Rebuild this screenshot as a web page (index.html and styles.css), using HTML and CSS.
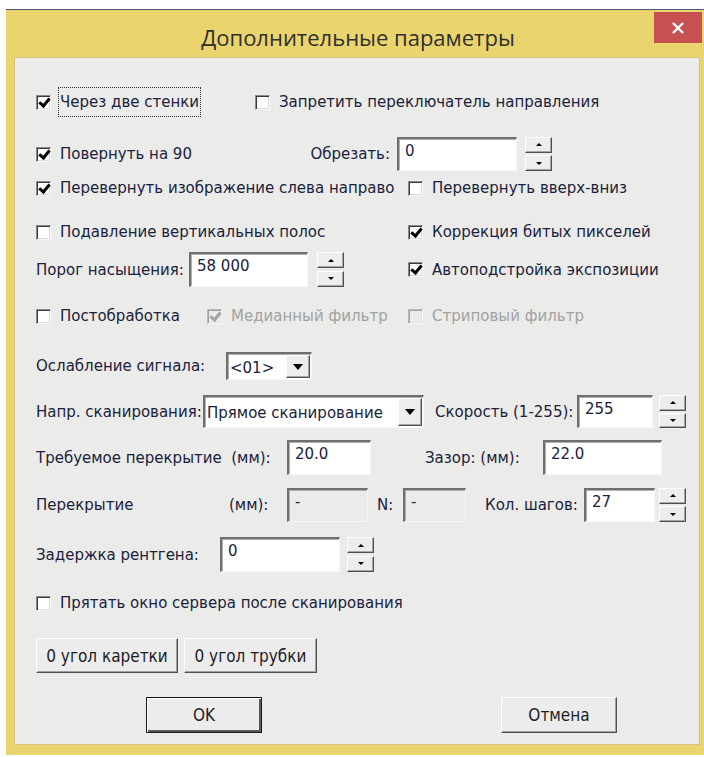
FILE: index.html
```html
<!DOCTYPE html>
<html lang="ru">
<head>
<meta charset="utf-8">
<title>Дополнительные параметры</title>
<link rel="stylesheet" href="styles.css">
</head>
<body>
<div class="window">
  <div class="titlebar">
    <span class="title">Дополнительные параметры</span>
    <span class="close"><svg width="14" height="14" viewBox="0 0 14 14"><path d="M2 2 L12 12 M12 2 L2 12" stroke="#fff" stroke-width="2.4"/></svg></span>
  </div>
  <div class="client">
    <!-- row 1 -->
    <div class="row r1">
      <label class="chk w219"><span class="box on"></span><span class="txt focus">Через две стенки</span></label>
      <label class="chk"><span class="box"></span><span class="txt">Запретить переключатель направления</span></label>
    </div>
    <!-- row 2 -->
    <div class="row r2">
      <label class="chk w261"><span class="box on"></span><span class="txt">Повернуть на 90</span></label>
      <span class="lbl w93 right">Обрезать:</span>
      <span class="field w120 ml7">0</span>
      <span class="spin ml8"><span class="sb"><i class="up"></i></span><span class="sb"><i class="dn"></i></span></span>
    </div>
    <!-- row 3 -->
    <div class="row r3">
      <label class="chk w372"><span class="box on"></span><span class="txt">Перевернуть изображение слева направо</span></label>
      <label class="chk"><span class="box"></span><span class="txt">Перевернуть вверх-вниз</span></label>
    </div>
    <!-- row 4 -->
    <div class="row r4">
      <label class="chk w372"><span class="box"></span><span class="txt">Подавление вертикальных полос</span></label>
      <label class="chk"><span class="box on"></span><span class="txt">Коррекция битых пикселей</span></label>
    </div>
    <!-- row 5 -->
    <div class="row r5">
      <span class="lbl w153">Порог насыщения:</span>
      <span class="field w119">58 000</span>
      <span class="spin ml9"><span class="sb"><i class="up"></i></span><span class="sb"><i class="dn"></i></span></span>
      <label class="chk ml64"><span class="box on"></span><span class="txt">Автоподстройка экспозиции</span></label>
    </div>
    <!-- row 6 -->
    <div class="row r6">
      <label class="chk w171"><span class="box"></span><span class="txt">Постобработка</span></label>
      <label class="chk w201 dis"><span class="box on"></span><span class="txt">Медианный фильтр</span></label>
      <label class="chk dis"><span class="box"></span><span class="txt">Стриповый фильтр</span></label>
    </div>
    <!-- row 7 -->
    <div class="row r7">
      <span class="lbl w190">Ослабление сигнала:</span>
      <span class="combo w86"><span class="cval">&lt;01&gt;</span><span class="drop"><i class="dn big"></i></span></span>
    </div>
    <!-- row 8 -->
    <div class="row r8">
      <span class="lbl w167">Напр. сканирования:</span>
      <span class="combo w221"><span class="cval">Прямое сканирование</span><span class="drop"><i class="dn big"></i></span></span>
      <span class="lbl w142 ml11">Скорость (1-255):</span>
      <span class="field w76">255</span>
      <span class="spin ml6"><span class="sb"><i class="up"></i></span><span class="sb"><i class="dn"></i></span></span>
    </div>
    <!-- row 9 -->
    <div class="row r9">
      <span class="lbl w251">Требуемое перекрытие &nbsp;(мм):</span>
      <span class="field w84">20.0</span>
      <span class="lbl w118 ml54">Зазор: (мм):</span>
      <span class="field w119">22.0</span>
    </div>
    <!-- row 10 -->
    <div class="row r10">
      <span class="lbl w193">Перекрытие</span>
      <span class="lbl w58">(мм):</span>
      <span class="field w81 off">-</span>
      <span class="lbl w26 ml9">N:</span>
      <span class="field w63 off">-</span>
      <span class="lbl w99 ml19">Кол. шагов:</span>
      <span class="field w71">27</span>
      <span class="spin ml4"><span class="sb"><i class="up"></i></span><span class="sb"><i class="dn"></i></span></span>
    </div>
    <!-- row 11 -->
    <div class="row r11">
      <span class="lbl w184">Задержка рентгена:</span>
      <span class="field w120">0</span>
      <span class="spin ml7"><span class="sb"><i class="up"></i></span><span class="sb"><i class="dn"></i></span></span>
    </div>
    <!-- row 12 -->
    <div class="row r12">
      <label class="chk"><span class="box"></span><span class="txt">Прятать окно сервера после сканирования</span></label>
    </div>
    <!-- row 13 -->
    <div class="row r13">
      <button class="btn w142">0 угол каретки</button>
      <button class="btn w133 ml6">0 угол трубки</button>
    </div>
    <!-- row 14 -->
    <div class="row r14">
      <button class="btn w116 ml110 default">OK</button>
      <button class="btn w116 ml239">Отмена</button>
    </div>
  </div>
</div>
</body>
</html>
```

FILE: styles.css
```css
html, body {
  margin: 0;
  padding: 0;
  background: #ffffff;
}

.window {
  box-sizing: border-box;
  margin: 9px 0 0 6px;
  width: 698px;
  height: 746px;
  background: #e9d46e;
  border-top: 1px solid #4f5570;
  display: flex;
  flex-direction: column;
}

.titlebar {
  height: 47px;
  display: flex;
  align-items: flex-start;
  flex: none;
}

.title {
  flex: 1;
  text-align: center;
  padding-left: 56px;
  font-family: "Open Sans", "Noto Sans", sans-serif;
  font-size: 22px;
  line-height: 54px;
  color: #2f2f2f;
}

.close {
  width: 48px;
  height: 31px;
  margin: 2px 2px 0 0;
  background: #c75050;
  display: flex;
  align-items: center;
  justify-content: center;
}

.client {
  box-sizing: border-box;
  margin: 0 4px 10px 8px;
  flex: 1;
  background: #ebebe9;
  border: 1px solid #d3c47e;
  padding: 29px 0 0 21px;
  font-family: "DejaVu Sans", Verdana, sans-serif;
  font-size: 15px;
  color: #1a2240;
}

.row {
  display: flex;
  align-items: center;
}

.r1 { height: 30px; }
.r2 { height: 34px; margin-top: 20px; }
.r3 { height: 22px; margin-top: 6px; }
.r4 { height: 22px; margin-top: 22px; }
.r5 { height: 35px; margin-top: 9px; }
.r6 { height: 22px; margin-top: 18px; }
.r7 { height: 28px; margin-top: 25px; }
.r8 { height: 33px; margin-top: 15px; }
.r9 { height: 35px; margin-top: 12px; }
.r10 { height: 34px; margin-top: 13px; }
.r11 { height: 35px; margin-top: 15px; }
.r12 { height: 22px; margin-top: 20px; }
.r13 { height: 35px; margin-top: 24px; }
.r14 { height: 36px; margin-top: 24px; }

/* fixed column widths */
.w26 { width: 26px; }
.w58 { width: 58px; }
.w63 { width: 63px; }
.w71 { width: 71px; }
.w76 { width: 76px; }
.w81 { width: 81px; }
.w84 { width: 84px; }
.w86 { width: 86px; }
.w93 { width: 93px; }
.w99 { width: 99px; }
.w116 { width: 116px; }
.w118 { width: 118px; }
.w119 { width: 119px; }
.w120 { width: 120px; }
.w133 { width: 133px; }
.w142 { width: 142px; }
.w153 { width: 153px; }
.w167 { width: 167px; }
.w171 { width: 171px; }
.w184 { width: 184px; }
.w190 { width: 190px; }
.w193 { width: 193px; }
.w201 { width: 201px; }
.w219 { width: 219px; }
.w221 { width: 221px; }
.w251 { width: 251px; }
.w261 { width: 261px; }
.w372 { width: 372px; }

.ml4 { margin-left: 4px; }
.ml6 { margin-left: 6px; }
.ml7 { margin-left: 7px; }
.ml8 { margin-left: 8px; }
.ml9 { margin-left: 9px; }
.ml11 { margin-left: 11px; }
.ml19 { margin-left: 19px; }
.ml54 { margin-left: 54px; }
.ml64 { margin-left: 64px; }
.ml110 { margin-left: 110px; }
.ml239 { margin-left: 239px; }

.lbl {
  flex: none;
  white-space: nowrap;
}
.right {
  text-align: right;
}

/* checkboxes */
.chk {
  flex: none;
  display: flex;
  align-items: center;
  white-space: nowrap;
}

.box {
  box-sizing: border-box;
  width: 15px;
  height: 15px;
  margin-right: 9px;
  background: #ffffff;
  border-style: solid;
  border-width: 1px;
  border-color: #8a8a8a #f8f8f8 #f8f8f8 #8a8a8a;
  box-shadow: inset 1px 1px #3a3a3a, inset -1px -1px #dcdcdc;
  position: relative;
  flex: none;
}

.box.on::after {
  content: "";
  position: absolute;
  left: 3px;
  top: 0px;
  width: 4px;
  height: 8px;
  border: solid #000;
  border-width: 0 3px 3px 0;
  transform: translate(1px, 0) rotate(40deg);
}

.txt {
  padding: 2px 1px;
  margin-left: -1px;
}

.txt.focus {
  outline: 1px dotted #333;
  padding: 5px 1px 5px;
}

.chk.dis .txt {
  color: #a2a2a2;
}
.chk.dis .box {
  background: #ebebe9;
  border-color: #b8b8b8 #f8f8f8 #f8f8f8 #b8b8b8;
  box-shadow: inset 1px 1px #a0a0a0, inset -1px -1px #e4e4e4;
}
.chk.dis .box.on::after {
  border-color: #a4a4a4;
}

/* text fields */
.field {
  box-sizing: border-box;
  flex: none;
  height: 100%;
  background: #ffffff;
  border-style: solid;
  border-width: 2px 1px 1px 2px;
  border-color: #6f6f6f #f6f6f6 #f6f6f6 #6f6f6f;
  box-shadow: inset 1px 1px #b0b0b0;
  padding: 3px 6px 0;
  white-space: nowrap;
}
.field.off {
  background: #ebebe9;
  color: #303030;
}

/* spin buttons */
.spin {
  flex: none;
  width: 27px;
  height: 100%;
  display: flex;
  flex-direction: column;
  justify-content: space-between;
}

.sb {
  box-sizing: border-box;
  height: 47%;
  background: #ededed;
  border-style: solid;
  border-width: 1px;
  border-color: #ffffff #4f4f4f #4f4f4f #ffffff;
  box-shadow: inset -1px -1px #a6a6a6;
  display: flex;
  align-items: center;
  justify-content: center;
}

.up, .dn {
  display: block;
  width: 0;
  height: 0;
  border-left: 3px solid transparent;
  border-right: 3px solid transparent;
}
.up {
  border-bottom: 3px solid #000;
}
.dn {
  border-top: 3px solid #000;
}
.dn.big {
  border-left-width: 5px;
  border-right-width: 5px;
  border-top-width: 6px;
}

/* combo boxes */
.combo {
  box-sizing: border-box;
  flex: none;
  height: 100%;
  background: #ffffff;
  border-style: solid;
  border-width: 2px 1px 1px 2px;
  border-color: #6f6f6f #f6f6f6 #f6f6f6 #6f6f6f;
  box-shadow: inset 1px 1px #b0b0b0;
  display: flex;
  align-items: stretch;
}

.cval {
  flex: 1;
  padding: 2px 2px 0;
  white-space: nowrap;
  overflow: hidden;
  display: flex;
  align-items: center;
}

.drop {
  box-sizing: border-box;
  width: 24px;
  margin: 1px 1px 1px 0;
  background: #ededed;
  border-style: solid;
  border-width: 1px;
  border-color: #ffffff #4f4f4f #4f4f4f #ffffff;
  box-shadow: inset -1px -1px #a6a6a6;
  display: flex;
  align-items: center;
  justify-content: center;
}

/* push buttons */
.btn {
  box-sizing: border-box;
  flex: none;
  height: 100%;
  padding: 0;
  background: #ececec;
  border-style: solid;
  border-width: 1px;
  border-color: #ffffff #505050 #505050 #ffffff;
  box-shadow: inset -1px -1px #a0a0a0;
  font-family: "Liberation Sans Narrow", "DejaVu Sans Condensed", "Liberation Sans", sans-serif;
  font-stretch: condensed;
  font-size: 17px;
  color: #1c1c24;
}

.btn.default {
  border: 1px solid #1a1a1a;
  box-shadow: inset 1px 1px #ffffff, inset -2px -2px #5a5a5a;
}
```
